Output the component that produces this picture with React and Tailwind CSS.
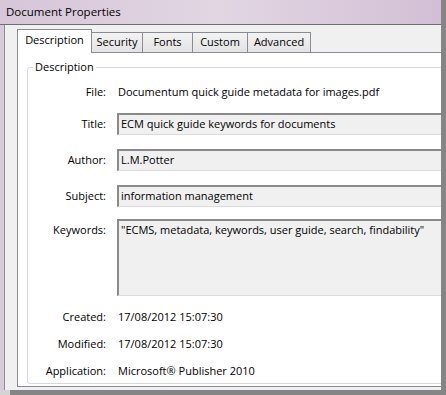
const Field = ({ children, tall }) => (
  <div
    className={`flex-1 border-t-2 border-l-2 border-b border-t-[#8a8a8a] border-l-[#8a8a8a] border-b-[#dcdcdc] bg-[#f0f0f0] pl-[2px] ${
      tall ? "h-[77px] leading-[16px] pt-[1px]" : "h-[22px] flex items-center"
    }`}
  >
    {children}
  </div>
);

const Row = ({ label, children, className = "", top }) => (
  <div className={`flex gap-[11px] ${top ? "items-start" : "items-center"} ${className}`}>
    <div className={`w-[78px] shrink-0 text-right ${top ? "pt-[3px] leading-[16px]" : ""}`}>
      {label}
    </div>
    {children}
  </div>
);

const tabs = [
  { name: "Security", w: "w-[52px]" },
  { name: "Fonts", w: "w-[51px]" },
  { name: "Custom", w: "w-[56px]" },
  { name: "Advanced", w: "w-[64px]" },
];

export default function App() {
  return (
    <div className="w-[446px] h-[395px] bg-[#858585] flex flex-col overflow-hidden [font-family:'Open_Sans',sans-serif] text-[11px] text-black">
      <div className="flex h-[390px] shrink-0">
        <div className="w-[441px] h-[390px] flex flex-col overflow-hidden bg-[#f0f0f0]">
          {/* Title bar */}
          <div className="h-[25px] shrink-0 flex items-center pl-[6px] border-b border-[#6f6f6f] bg-linear-to-r from-[#d6c6d8] via-[#e2d6e3] to-[#d3bfd5] text-[11.5px]">
            Document Properties
          </div>

          <div className="flex-1 flex border-l-4 border-[#d8cbd9]">
            <div className="flex-1 flex flex-col border-l border-[#8f8f8f] pt-[4px] pb-[3px]">
              {/* Tabs */}
              <div className="ml-[12px] h-[24px] shrink-0 flex items-end border-b border-[#898c95]">
                <div className="w-[75px] h-[24px] -mb-px border border-b-0 border-[#898c95] bg-white flex items-center justify-center pb-[2px]">
                  Description
                </div>
                {tabs.map((t) => (
                  <div
                    key={t.name}
                    className={`${t.w} h-[20px] -ml-px border border-b-0 border-[#898c95] bg-linear-to-b from-[#f3f3f3] to-[#e3e3e3] flex items-center justify-center`}
                  >
                    {t.name}
                  </div>
                ))}
              </div>

              {/* Tab panel */}
              <div className="ml-[12px] flex-1 flex flex-col border-l border-b border-[#898c95] bg-white pt-[14px] pb-[2px]">
                <div className="relative flex-1 flex flex-col ml-[9px] -mr-[10px] border border-[#d5d9dc] rounded-[3px]">
                  <span className="absolute -top-[9px] left-[5px] px-[2px] bg-white leading-[16px]">
                    Description
                  </span>

                  <Row label="File:" className="mt-[13px] h-[22px]">
                    <div className="pl-px">Documentum quick guide metadata for images.pdf</div>
                  </Row>
                  <Row label="Title:" className="mt-[10px]">
                    <Field>ECM quick guide keywords for documents</Field>
                  </Row>
                  <Row label="Author:" className="mt-[14px]">
                    <Field>L.M.Potter</Field>
                  </Row>
                  <Row label="Subject:" className="mt-[14px]">
                    <Field>information management</Field>
                  </Row>
                  <Row label="Keywords:" className="mt-[12px]" top>
                    <Field tall>"ECMS, metadata, keywords, user guide, search, findability"</Field>
                  </Row>
                  <Row label="Created:" className="mt-[10px] h-[22px]">
                    <div className="pl-px">17/08/2012 15:07:30</div>
                  </Row>
                  <Row label="Modified:" className="mt-[5px] h-[22px]">
                    <div className="pl-px">17/08/2012 15:07:30</div>
                  </Row>
                  <Row label="Application:" className="mt-[6px] h-[21px]">
                    <div className="pl-px">Microsoft® Publisher 2010</div>
                  </Row>
                </div>
              </div>
            </div>
          </div>
        </div>
      </div>
      <div className="h-[5px] flex">
        <div className="w-[10px] bg-[#d4d4d4]" />
      </div>
    </div>
  );
}
